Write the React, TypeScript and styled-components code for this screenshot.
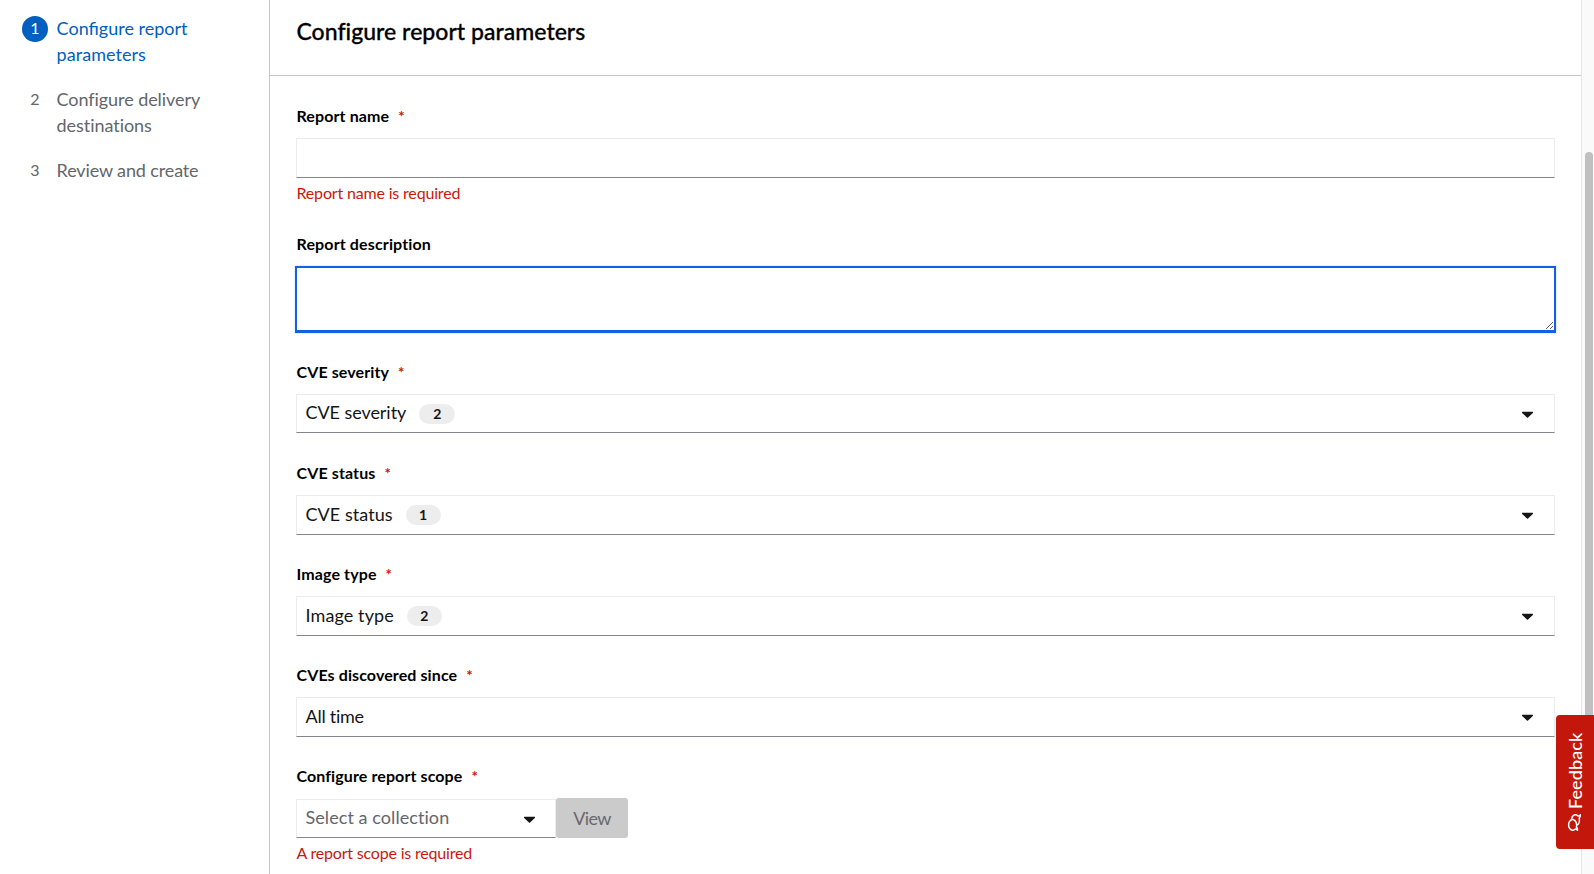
import React from 'react';
import styled, { createGlobalStyle } from 'styled-components';
import { FaRegComments } from 'react-icons/fa';

const GlobalStyle = createGlobalStyle`
  *, *::before, *::after { box-sizing: border-box; }
  body {
    margin: 0;
    overflow: hidden;
    background: #fff;
    color: #151515;
    font-family: Lato, "Liberation Sans", sans-serif;
  }
`;

const Page = styled.div`
  position: relative;
  display: flex;
  height: 874px;
  overflow: hidden;
`;

const Sidebar = styled.nav`
  flex: 0 0 270px;
  border-right: 1px solid #c7c7c7;
  padding: 16px 40px 0 22px;
`;

const Steps = styled.ol`
  display: flex;
  flex-direction: column;
  gap: 19px;
  margin: 0;
  padding: 0;
  list-style: none;
`;

const Step = styled.li<{ $current?: boolean }>`
  display: flex;
  gap: 8.6px;
  color: ${(p) => (p.$current ? '#0060c0' : '#63666a')};
  font-size: 18px;
  line-height: 26.4px;
`;

const StepNumber = styled.span<{ $current?: boolean }>`
  flex: none;
  width: 26px;
  height: 26px;
  border-radius: 50%;
  background: ${(p) => (p.$current ? '#0060c0' : 'transparent')};
  color: ${(p) => (p.$current ? '#fff' : 'inherit')};
  font-size: 16px;
  line-height: 24px;
  text-align: center;
`;

const Track = styled.span<{ $spacing?: number }>`
  letter-spacing: ${(p) => p.$spacing ?? 0}px;
  white-space: nowrap;
`;

const StepLabel = styled.span`
  display: flex;
  flex-direction: column;
  margin-top: -1px;
`;

const Main = styled.main`
  flex: 1;
  min-width: 0;
`;

const Header = styled.header`
  height: 76px;
  border-bottom: 1px solid #c7c7c7;
  padding: 16px 26px 0 26.5px;
`;

const Title = styled.h2`
  margin: 0;
  color: #000;
  font-size: 23px;
  font-weight: 500;
  line-height: 30px;
  -webkit-text-stroke: 0.3px #000;
`;

const Form = styled.form`
  padding: 30px 26px 0;
`;

const Field = styled.div<{ $height: number }>`
  height: ${(p) => p.$height}px;
`;

const Label = styled.label`
  display: flex;
  gap: 9px;
  height: 32px;
  padding-left: 0.5px;
  color: #000;
  font-size: 16px;
  font-weight: 700;
  line-height: 19px;
`;

const Required = styled.span`
  color: #c9190b;
  font-size: 15px;
  font-weight: 700;
  line-height: 20px;
`;

const TextInput = styled.input`
  display: block;
  width: 100%;
  height: 40px;
  border: 1px solid #ececec;
  border-bottom-color: #83868a;
  outline: none;
  background: #fff;
`;

const TextArea = styled.textarea`
  display: block;
  width: calc(100% + 2px);
  height: 67px;
  margin-left: -1px;
  border: 2px solid #155fe3;
  border-bottom-width: 3px;
  outline: none;
  box-shadow: 0 0 0 1px #e9f1fc;
  background: #fff;
  resize: vertical;
`;

const Helper = styled.div`
  padding: 5px 0 0 0.5px;
  color: #c9190b;
  font-size: 16px;
  line-height: 19px;
`;

const Toggle = styled.button<{ $height?: number; $placeholder?: boolean }>`
  display: flex;
  align-items: center;
  width: 100%;
  height: ${(p) => p.$height ?? 40}px;
  border: 1px solid #ececec;
  border-bottom-color: #83868a;
  padding: 0 ${(p) => (p.$placeholder ? 20 : 21)}px 0 8.5px;
  background: #fff;
  color: ${(p) => (p.$placeholder ? '#63666a' : '#151515')};
  font: 18px/24px Lato, "Liberation Sans", sans-serif;
  text-align: left;
`;

const ToggleText = styled.span<{ $spacing: number; $raise?: number }>`
  padding-bottom: ${(p) => p.$raise ?? 2}px;
  letter-spacing: ${(p) => p.$spacing}px;
  white-space: nowrap;
`;

const Badge = styled.span<{ $width: number }>`
  width: ${(p) => p.$width}px;
  height: 20px;
  margin-left: 13px;
  border-radius: 10px;
  background: #ededed;
  font-size: 14px;
  font-weight: 700;
  line-height: 19px;
  text-align: center;
`;

const CaretIcon = styled.svg`
  flex: none;
  width: 11px;
  height: 18px;
  margin-left: auto;
  fill: #151515;
`;

const ScopeRow = styled.div`
  display: grid;
  grid-template-columns: 260px 72px;
  align-items: end;
`;

const ViewButton = styled.button`
  height: 40px;
  border: 0;
  border-radius: 3px;
  padding: 0;
  background: #cbcbcb;
  color: #66696d;
  font: 18px/40px Lato, "Liberation Sans", sans-serif;
`;

const ScrollGutter = styled.div`
  flex: 0 0 13px;
  border-left: 1px solid #e6e6e6;
  padding: 152px 1px 0 3px;
  background: #fafafa;
`;

const ScrollThumb = styled.div`
  height: 640px;
  border-radius: 4px;
  background: #c0c0c0;
`;

const Feedback = styled.button`
  position: absolute;
  top: 715px;
  right: 0;
  display: flex;
  align-items: center;
  gap: 5px;
  width: 38px;
  height: 134px;
  border: 0;
  border-radius: 0 4px 4px 0;
  padding: 18px 0 0;
  background: #c4170c;
  color: #fff;
  font: 500 18px/38px Lato, "Liberation Sans", sans-serif;
  writing-mode: vertical-rl;
  transform: rotate(180deg);
`;

const FeedbackIcon = styled(FaRegComments)`
  flex: none;
  width: 17px;
  height: 17px;
  transform: rotate(90deg);
`;

function Caret() {
  return (
    <CaretIcon viewBox="13 0 294 512" preserveAspectRatio="none" aria-hidden="true">
      <path d="M31.3 192h257.3c17.8 0 26.7 21.5 14.1 34.1L174.1 354.7c-7.8 7.8-20.5 7.8-28.3 0L17.2 226.1C4.6 213.5 13.4 192 31.3 192z" />
    </CaretIcon>
  );
}

function FieldLabel({ text, spacing, required }: { text: string; spacing: number; required?: boolean }) {
  return (
    <Label>
      <Track $spacing={spacing}>{text}</Track>
      {required && <Required>*</Required>}
    </Label>
  );
}

const steps = [
  { lines: [['Configure report', 0], ['parameters', 0.05]] },
  { lines: [['Configure delivery', -0.07], ['destinations', -0.05]] },
  { lines: [['Review and create', -0.13]] },
] as { lines: [string, number][] }[];

const selects = [
  { label: 'CVE severity', labelSpacing: 0.1, value: 'CVE severity', spacing: -0.06, count: 2, badge: 36, height: 39 },
  { label: 'CVE status', labelSpacing: 0.12, value: 'CVE status', spacing: 0.06, count: 1, badge: 35, height: 40 },
  { label: 'Image type', labelSpacing: 0.12, value: 'Image type', spacing: 0.1, count: 2, badge: 35, height: 40 },
  { label: 'CVEs discovered since', labelSpacing: 0.1, value: 'All time', spacing: -0.25, badge: 0, height: 40 },
];

export default function App() {
  return (
    <>
      <GlobalStyle />
      <Page>
        <Sidebar>
          <Steps>
            {steps.map((step, i) => (
              <Step key={i} $current={i === 0}>
                <StepNumber $current={i === 0}>{i + 1}</StepNumber>
                <StepLabel>
                  {step.lines.map(([text, spacing]) => (
                    <Track key={text} $spacing={spacing}>{text}</Track>
                  ))}
                </StepLabel>
              </Step>
            ))}
          </Steps>
        </Sidebar>
        <Main>
          <Header>
            <Title><Track $spacing={0.02}>Configure report parameters</Track></Title>
          </Header>
          <Form>
            <Field $height={128}>
              <FieldLabel text="Report name" spacing={0.11} required />
              <TextInput />
              <Helper><Track $spacing={-0.17}>Report name is required</Track></Helper>
            </Field>
            <Field $height={128}>
              <FieldLabel text="Report description" spacing={0.14} />
              <TextArea />
            </Field>
            {selects.map((s) => (
              <Field key={s.label} $height={101}>
                <FieldLabel text={s.label} spacing={s.labelSpacing} required />
                <Toggle type="button" $height={s.height}>
                  <ToggleText $spacing={s.spacing} $raise={s.height === 39 ? 3 : 2}>{s.value}</ToggleText>
                  {s.count && <Badge $width={s.badge}>{s.count}</Badge>}
                  <Caret />
                </Toggle>
              </Field>
            ))}
            <Field $height={101}>
              <FieldLabel text="Configure report scope" spacing={0.1} required />
              <ScopeRow>
                <Toggle type="button" $height={39} $placeholder>
                  <ToggleText $spacing={0.07} $raise={3}>Select a collection</ToggleText>
                  <Caret />
                </Toggle>
                <ViewButton type="button"><Track $spacing={-0.6}>View</Track></ViewButton>
              </ScopeRow>
              <Helper><Track $spacing={-0.19}>A report scope is required</Track></Helper>
            </Field>
          </Form>
        </Main>
        <ScrollGutter>
          <ScrollThumb />
        </ScrollGutter>
        <Feedback type="button">
          <FeedbackIcon />
          <Track $spacing={0.1}>Feedback</Track>
        </Feedback>
      </Page>
    </>
  );
}
